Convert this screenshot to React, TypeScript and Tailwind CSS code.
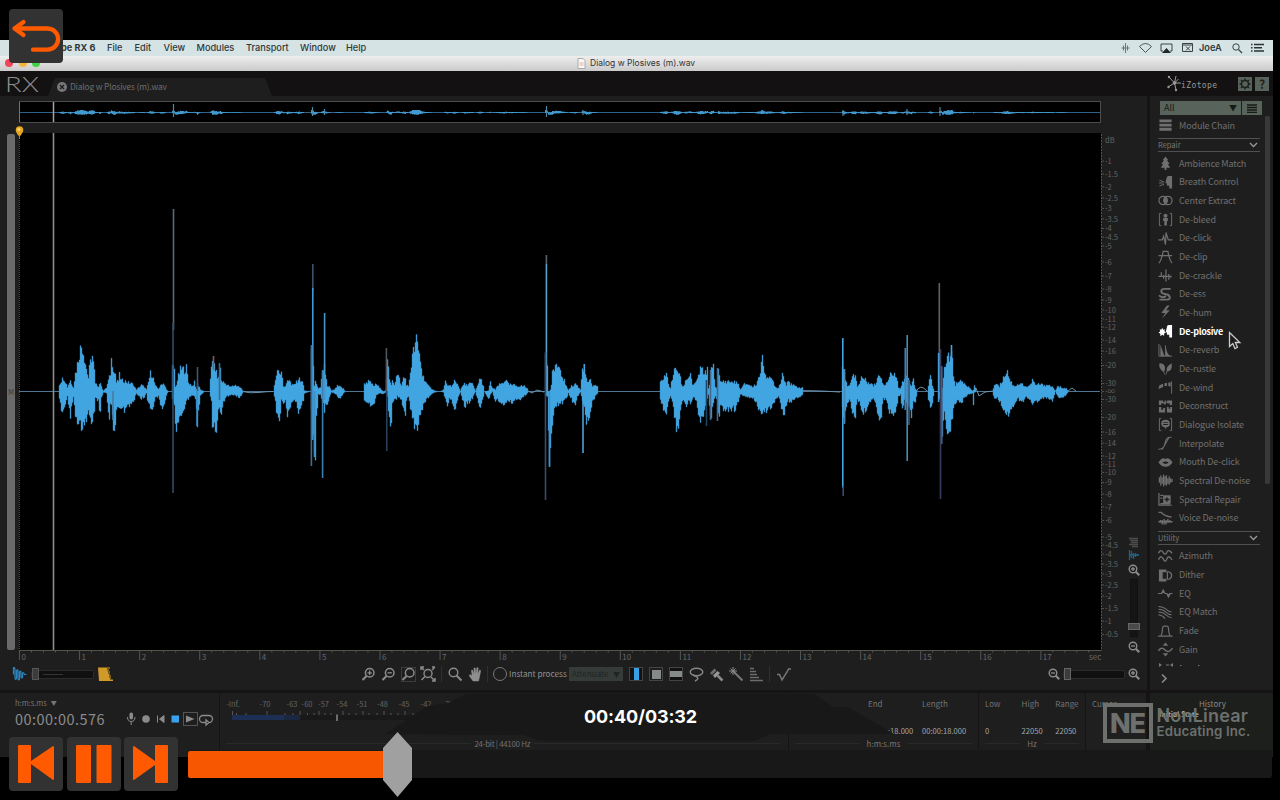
import React from "react";

type Pt = [number, number, number];

/* x, extent above the centre line, extent below the centre line */
const SEGMENTS: Pt[][] = [
  [[58,0,0],[59,8,8],[61,12,20],[63,15,22],[65,11,14],[67,5,6],[69,10,20],[70,13,30],[71,8,15],[73,5,6],[75,20,25],[76,24,35],[79,43,39],[81,50,40],[82,50,42],[84,38,38],[86,25,30],[88,15,20],[89,25,30],[91,38,36],[92,39,36],[94,22,20],[95,8,8],[98,6,10],[100,10,26],[101,5,6],[103,1,1],[106,4,2],[108,12,20],[109,15,37],[110,20,14],[111,35,14],[112,33,30],[114,20,44],[115,20,42],[116,10,18],[118,12,18],[119,18,18],[121,12,22],[124,12,20],[127,10,16],[130,9,14],[133,8,10],[134,5,8],[136,2,2],[138,4,5],[141,7,8],[144,5,6],[146,2,2],[148,10,15],[150,20,18],[152,18,22],[153,14,15],[155,6,7],[158,3,5],[160,6,14],[162,9,17],[164,8,15],[166,2,4],[168,0,0]],
  [[171,0,0],[172,26,8],[174,25,15],[175,5,30],[176,8,44],[178,17,30],[180,24,24],[182,25,22],[184,24,18],[186,26,10],[188,10,8],[190,8,6],[192,6,4],[194,10,5],[195,5,8],[196,3,20],[197,8,34],[199,5,14],[200,2,4],[204,0,0]],
  [[209,0,0],[211,31,10],[212,30,45],[214,30,35],[216,20,42],[218,14,22],[220,25,20],[221,12,30],[223,10,12],[226,8,5],[230,5,4],[235,7,4],[239,5,7],[241,3,4],[243,0,0]],
  [[273,0,0],[274,7,5],[276,18,20],[278,24,33],[280,20,30],[281,26,10],[283,6,14],[285,5,10],[287,13,24],[289,13,24],[291,7,13],[293,7,10],[296,10,10],[298,14,22],[301,12,14],[303,7,10],[304,1,2],[310,0,0]],
  [[310,0,0],[311,46,20],[313,30,40],[314,6,66],[315,10,64],[316,10,30],[318,3,3],[320,4,3],[322,20,10],[324,30,20],[325,20,15],[327,5,14],[329,5,7],[331,1,1],[334,2,2],[337,6,5],[340,5,8],[343,3,2],[345,0,0]],
  [[363,0,0],[364,8,10],[366,10,13],[368,11,14],[371,9,16],[373,6,15],[376,8,4],[380,3,2],[383,0,3],[385,1,1],[387,30,5],[388,26,20],[389,12,35],[391,8,38],[392,14,15],[394,8,8],[396,16,8],[397,18,5],[399,14,6],[401,6,10],[403,15,18],[405,14,23],[406,8,10],[408,5,5],[410,22,20],[412,38,28],[414,48,35],[416,55,41],[418,45,36],[420,35,28],[422,18,20],[424,14,12],[427,7,8],[430,4,4],[434,1,1],[438,0,0]],
  [[440,0,0],[443,2,1],[445,10,8],[447,6,14],[449,8,8],[451,5,10],[453,8,14],[454,12,21],[456,10,15],[458,6,6],[460,1,1],[462,6,8],[464,8,17],[466,7,14],[469,9,11],[472,8,8],[475,1,0],[477,6,8],[479,14,20],[481,12,12],[483,6,7],[484,0,0],[488,1,8],[490,10,4],[492,4,0],[495,2,12],[497,6,8],[500,8,12],[503,10,13],[505,13,15],[508,8,9],[511,7,12],[514,7,10],[517,6,10],[520,6,8],[524,6,5],[527,3,2],[528,0,0]],
  [[544,0,0],[545,38,4],[547,30,5],[548,0,40],[549,0,70],[550,2,68],[551,6,45],[552,20,32],[554,28,20],[556,29,15],[558,26,15],[560,20,12],[562,16,14],[564,12,10],[566,5,8],[568,2,2],[571,6,8],[573,6,14],[575,9,14],[577,6,6],[580,2,1],[582,26,10],[584,27,20],[586,13,36],[588,10,28],[590,12,24],[592,6,12],[595,6,5],[597,5,2],[598,0,0]],
  [[659,0,0],[660,10,10],[663,15,18],[666,20,25],[668,8,12],[670,4,6],[672,15,12],[674,22,28],[676,25,38],[679,20,34],[681,8,15],[683,5,8],[685,12,16],[688,16,11],[690,20,14],[692,8,8],[694,8,6],[696,10,12],[698,18,22],[700,24,34],[702,24,30],[704,18,18],[706,22,10],[707,25,8],[708,3,4],[710,12,25],[711,32,28],[713,26,14],[715,5,5],[717,3,10],[718,22,30],[720,10,18],[722,11,18],[728,11,20],[735,10,19],[738,8,10],[740,2,3],[744,8,5],[748,8,6],[752,5,7],[756,8,12],[759,18,20],[762,34,26],[765,20,22],[768,14,18],[772,13,17],[775,5,9],[778,4,6],[780,10,12],[782,21,22],[784,12,26],[786,8,14],[788,14,10],[790,8,12],[794,6,8],[800,4,5],[802,4,3],[803,0,0]],
  [[841,0,0],[842,30,20],[844,22,32],[845,14,20],[847,5,12],[849,8,8],[851,12,16],[853,18,27],[855,18,28],[857,6,8],[859,8,12],[861,16,22],[864,14,22],[867,10,18],[870,10,10],[873,6,8],[876,10,15],[878,18,28],[879,20,34],[881,14,24],[883,8,8],[885,8,8],[888,14,20],[890,20,25],[893,18,24],[896,17,18],[898,5,6],[900,4,4],[902,10,22],[904,14,8],[905,20,10],[909,10,20],[911,6,25],[913,14,12],[915,3,10],[917,0,0]],
  [[927,0,0],[928,6,8],[930,18,19],[932,6,12],[934,0,0]],
  [[938,0,0],[939,20,8],[941,20,8],[942,4,50],[944,25,20],[946,36,35],[948,38,45],[949,34,48],[951,42,30],[952,35,36],[953,15,20],[955,7,12],[958,12,10],[961,12,12],[964,8,7],[968,5,3],[972,1,2],[973,2,17],[974,7,1],[976,0,0]],
  [[992,0,0],[994,8,8],[997,8,6],[999,6,10],[1001,10,14],[1003,15,20],[1005,20,24],[1007,24,26],[1009,14,22],[1012,8,16],[1015,6,12],[1018,8,8],[1022,8,12],[1026,5,6],[1030,7,10],[1032,13,16],[1035,7,12],[1038,8,10],[1044,7,7],[1048,7,8],[1052,5,10],[1055,1,0],[1057,5,5],[1060,5,8],[1063,4,7],[1066,3,3],[1068,0,0]],
];

/* x, top, bottom, colour */
const SPIKES: [number, number, number, string][] = [
  [173.5,209,330,"#596a76"],[173,323,493,"#2f4c68"],[197.5,367,391,"#45556b"],[197,391,426,"#388dc4"],
  [213.5,356,370,"#8a5c55"],[219.5,363,400,"#3a6a8c"],[113,391,420,"#4a7ba0"],
  [312.8,264,290,"#39546b"],[312.8,288,440,"#3c9bd6"],[311.4,345,466,"#466b8f"],[314.5,391,457,"#3c8ec6"],
  [322.6,370,478,"#3a7db0"],[324.6,313,400,"#4596cc"],
  [386.4,348,392,"#50565f"],[386.8,391,451,"#27415a"],
  [546.4,255,264,"#5c626c"],[546.4,264,392,"#55a3cf"],[545.5,352,500,"#3b4a68"],[549.5,391,467,"#3f93c9"],
  [583,392,453,"#4ba3d8"],[584.3,364,392,"#45a2dc"],
  [706.5,380,426,"#1c4563"],[710.5,370,420,"#46688a"],[717.5,368,421,"#46688a"],
  [842.8,338,488,"#43a5e0"],[843.2,486,496,"#334a7a"],[844.5,369,424,"#4a86b0"],
  [905.3,348,410,"#3f83b5"],[907.2,335,461,"#4a8ab8"],[909,380,425,"#385a7a"],
  [939.3,283,392,"#60606c"],[940.5,349,499,"#3a3c5e"],[941.8,366,444,"#3d5d80"],[951.5,345,392,"#42a4e0"],[938.6,353,402,"#3f9cd8"],
];

/* Repeatable ripple that gives the envelope its uneven edge */
function ripple(n: number) {
  const v = Math.sin(n * 12.9898) * 43758.5453;
  return v - Math.floor(v);
}

function outline(seg: Pt[], cy: number, k: number) {
  const up: string[] = [];
  const dn: string[] = [];
  for (let i = 0; i < seg.length - 1; i++) {
    const [x0, u0, d0] = seg[i];
    const [x1, u1, d1] = seg[i + 1];
    for (let x = x0; x < x1; x++) {
      const t = (x - x0) / (x1 - x0);
      const u = (u0 + (u1 - u0) * t) * (0.72 + 0.36 * ripple(x));
      const d = (d0 + (d1 - d0) * t) * (0.72 + 0.36 * ripple(x + 0.37));
      up.push(`${x},${(cy - Math.min(k === 1 ? 200 : 2.4, u * k)).toFixed(1)} ${x + 1},${(cy - Math.min(k === 1 ? 200 : 2.4, u * k)).toFixed(1)}`);
      dn.unshift(`${x + 1},${(cy + Math.min(k === 1 ? 200 : 2.2, d * k)).toFixed(1)} ${x},${(cy + Math.min(k === 1 ? 200 : 2.2, d * k)).toFixed(1)}`);
    }
  }
  return up.concat(dn).join(" ");
}

const DB: [string, number][] = [
  ["dB",140.5],["-1",161],["-1.5",174],["-2",187],["-2.5",198],["-3",208.5],["-3.5",219],["-4",228.5],["-4.5",237],["-5",246],["-6",262],["-7",276],["-8",289],["-9",300],["-10",310],["-11",319],["-12",327],["-14",340],["-16",351],["-20",365.5],["-30",383.5],["-∞",391.5],["-30",399.5],["-20",417.5],["-16",432],["-14",443],["-12",456],["-11",464],["-10",472.5],["-9",482.5],["-8",494],["-7",507],["-6",520.5],["-5",537],["-4.5",545],["-4",554],["-3.5",564],["-3",574],["-2.5",585],["-2",596],["-1.5",608.5],["-1",621],["-0.5",634.5],
];

function Overview() {
  return (
    <svg width="1083" height="23" viewBox="18 101 1083 23" className="block">
      <rect x="19.5" y="101.5" width="1081" height="21" fill="#000" stroke="#4c4c4c" />
      <path d="M19.5 102v20" stroke="#7c7b3c" />
      <path d="M20 112.500H1100" stroke="#2f6288" />
      {SEGMENTS.map((s, i) => <polygon key={i} points={outline(s, 112.5, 0.065)} fill="#4199d0" />)}
      <path d="M173.500 104v13M546.500 106v11M312.500 107v9M324.500 109v6M843 110v6M907 109v6M940 107v9M583 110v5" stroke="#4e88ab" strokeWidth="1.200" />
      <path d="M53.500 102v20" stroke="#a5a5a5" strokeWidth="1.500" />
    </svg>
  );
}

function WaveChart() {
  const seconds = Array.from({ length: 18 }, (_, i) => i);
  const minor = Array.from({ length: 90 }, (_, i) => i);
  return (
    <svg width="1109" height="540" viewBox="16 124 1109 540" className="block shrink-0 overflow-visible">
      <rect x="19" y="133" width="1082" height="517" fill="#000" />
      <path d="M19.500 134V650" stroke="#55562c" strokeDasharray="1 1" />
      <path d="M19 391.500H1100" stroke="#4d7593" />
      <path d="M243 391.500q6 2 15 1t15-1M528 391l4 2 5-3 7 2M790 391q20 -1 50 1M916 392q4-9 11-1M976 388l3 8 6-4 8-1M1068 391l4-3 4 3" stroke="#6c93ad" fill="none" strokeWidth="1" />
      {SEGMENTS.map((s, i) => <polygon key={i} points={outline(s, 391.5, 1)} fill="#41a5e1" stroke="#3d86b8" strokeWidth=".4" />)}
      {SPIKES.map((s, i) => <path key={i} d={`M${s[0]} ${s[1]}V${s[2]}`} stroke={s[3]} strokeWidth="1.600" />)}
      <path d="M53.500 133V650" stroke="#8d8d8d" strokeWidth="1.600" />
      <path d="M19.500 139v-4" stroke="#a98320" />
      <path d="M15.700 130a3.800 3.800 0 1 1 7.600 0c0 2.600-2 3.400-2.300 5.500h-3c-.3-2-2.300-3-2.300-5.500z" fill="#e6a820" />
      <circle cx="18.800" cy="129.500" r="1.500" fill="#f6d77b" />
      <path d="M19 650.500H1101.500" stroke="#555649" />
      {minor.map((m) => <path key={m} d={`M${19.5 + m * 12.015} 650v${m % 5 === 0 ? 0 : 2.5}`} stroke="#555" />)}
      {seconds.map((s) => (
        <g key={s}>
          <path d={`M${19.5 + s * 60.08} 650v10`} stroke="#555" />
          <text x={21.5 + s * 60.08} y="659.500" fill="#686868" fontSize="8" fontFamily="'Noto Sans CJK SC', sans-serif">{s}</text>
        </g>
      ))}
      <text x="1089" y="659.500" fill="#686868" fontSize="8" fontFamily="'Noto Sans CJK SC', sans-serif">sec</text>
      <path d="M1101.500 134V650" stroke="#51524a" strokeDasharray="2 1" />
      {DB.map(([t, y], i) => (
        <g key={i}>
          {i > 0 && <path d={`M1102 ${y}h2`} stroke="#4f4f4f" />}
          <text x="1105" y={y + 2.8} fill="#646464" fontSize="7.500" fontFamily="'Noto Sans CJK SC', sans-serif">{t}</text>
        </g>
      ))}
    </svg>
  );
}

const S = { fill: "none", stroke: "currentColor", strokeWidth: 1.3 } as const;

const ICONS: Record<string, React.ReactNode> = {
  "Module Chain": <path d="M2 2h13v3H2zM2 6.500h13v3H2zM2 11h13v3H2z" fill="currentColor" />,
  "Ambience Match": <path d="M8.500 1l3 4H10l3 4h-2l2.500 4H9.500v2.500h-2V13h-4L6 9H4l3-4H5.500z" fill="currentColor" />,
  "Breath Control": <><path d="M9.500 4Q10 1.500 12 1.500h3.500V15h-3v-3H10V9.500L8.500 9z" fill="currentColor" /><path d="M2 6l5 2M1.500 9h5M2 12l5-1.500" {...S} strokeWidth={1} /></>,
  "Center Extract": <><circle cx="6" cy="8.500" r="4.500" {...S} /><circle cx="11" cy="8.500" r="4.500" {...S} /><path d="M8.500 4.800q4 3.700 0 7.400-4-3.700 0-7.400z" fill="currentColor" /></>,
  "De-bleed": <><path d="M4 2H2v13h2M13 2h2v13h-2" {...S} strokeWidth={1} /><circle cx="8.500" cy="4.500" r="2.200" fill="currentColor" /><path d="M6 7h5v3H10v5H7.200v-5H6z" fill="currentColor" /></>,
  "De-click": <path d="M1 10h4l1.500-4L8.500 15 9 2l2.500 8H16" {...S} />,
  "De-clip": <path d="M1.500 15.500Q4 13 6 3h5q2 10 4.500 12.500M1 7.500h14.500" {...S} />,
  "De-crackle": <path d="M1 9.500h14M4 5v5M6.500 8v4M9 2v13M12 7v6M14 9v2" {...S} />,
  "De-ess": <path d="M14 2.500H7.500q-3.500 0-3.500 2.500t4 3 5 3-3 3H2M1.500 9.500Q5 13 9 10" {...S} strokeWidth={2} />,
  "De-hum": <path d="M10 1L4 9h4l-3 6 8-9H9l4-5z" fill="currentColor" />,
  "De-plosive": <><path d="M10 4Q10 1.500 12 1.500h3.500V15h-3v-3H10V9.500L8.700 9z" fill="currentColor" /><path d="M5 4.500l1 2 2-.5-.8 2L9 9.500l-2 1V13l-2-1-2 1.500V11L1 9.500 2.800 8.400 2.300 6 4 6.500z" fill="currentColor" /></>,
  "De-reverb": <><path d="M1.500 1.500v13h14M8.500 3v11.500" {...S} strokeWidth={1} /><path d="M3 2q2 6 4.500 12.500H3zM9 5q1 8 5 9.500H9z" fill="currentColor" /></>,
  "De-rustle": <><path d="M2 3q6 0 6 5 0 4-2 4Q1 9 2 3z" fill="currentColor" /><path d="M15 3q1 6-2 8l-3 1q-2-5 5-9z" fill="currentColor" /><path d="M6 11l2 4M10 11l-1 4" {...S} strokeWidth={0.8} /></>,
  "De-wind": <><path d="M15 2v13" {...S} strokeWidth={1} /><path d="M14 3v4.500l-2.500-.5V3.500zM10 3.500V7L7.500 7V4zM6 4.500V8L1 10l1-4z" fill="currentColor" /></>,
  "Deconstruct": <path d="M1.500 2H6v2h1.500V2H9v4H6.500V5H4v2H1.500zM10 2h5.500v5H13V5h-3zM1.500 9H4v3h2v-2h2v5H1.500zM10 9h2v2h1.500V9h2v6H10zM9.500 3.500h3v1h-3z" fill="currentColor" />,
  "Dialogue Isolate": <><path d="M4 2H2v13h2M13 2h2v13h-2" {...S} strokeWidth={1} /><path d="M8.500 3.500Q13 3.500 13 7.500t-3.500 4L8 14v-2.500Q4 11.500 4 7.500t4.500-4zM6 7h5v-1H6zM6 9h5V8H6z" fill="currentColor" fillRule="evenodd" /></>,
  "Interpolate": <path d="M1 14.500Q7 15 8 8t7-6M5 15L12.500 1.500" {...S} strokeWidth={1.1} />,
  "Mouth De-click": <path d="M1 8.500Q4 4 6.500 4l2 .8 2-.8Q13 4 16 8.500 13 13 8.500 13T1 8.500zM5 8.500q3.500 3 7 0-3.500-2-7 0z" fill="currentColor" fillRule="evenodd" />,
  "Spectral De-noise": <path d="M2 5v6M3.500 3v11M5 5v7M6.500 2v13M8 4v9M9.500 3v11M11 6v6M12.500 4v9M14 6v5M15.500 7v3" {...S} />,
  "Spectral Repair": <><path d="M1.500 1.500v13H15M3 4h3M3 7h2M3 13h10" {...S} /><path d="M6 4h8v9H6z" fill="currentColor" /><path d="M10 6v5M7.500 8.500h5" stroke="#1e1e1e" strokeWidth="1.500" /></>,
  "Voice De-noise": <path d="M1 2h3q4 4 11 5M3 10v3M5 10v5M7 9v6M9 10v5M11 9v4M13 10v3M1 12h15" {...S} strokeWidth={1.5} />,
  "Azimuth": <path d="M1 5q2.500-5 5-1t4 0 5.500 1M1 12q2.500-6 5-1t4 0 5.500 1" {...S} strokeWidth={1.5} />,
  "Dither": <><path d="M1.500 2h8v13h-8zM5.500 5v7h4V5z" fill="currentColor" fillRule="evenodd" /><path d="M10.500 4.500H12q3 1 3 4t-3 4h-1.500z" {...S} /></>,
  "EQ": <><path d="M0.500 8.500h4L6 5l2 3.500h2L11.500 12 13 8.500h3" {...S} /><path d="M4 8l2-4 2 4zM9.500 9l2.500 4 2-4z" fill="currentColor" /></>,
  "EQ Match": <path d="M1 2q5 0 8 3t6 3M1 5q5 0 8 3t6 3M1 8q5 0 8 3t6 3M1 11q5 1 7 4" {...S} strokeWidth={1.1} />,
  "Fade": <path d="M0.500 13.500h3Q5 11 5.500 4q.2-1.200 1.500-1.200h3q1.300 0 1.500 1.200.5 7 2 9.500h2.500M3 13.500h11" {...S} />,
  "Gain": <><path d="M1 10q3-5 7-1t8-2" {...S} strokeWidth={1.6} /><path d="M5.500 4.500L8.500 1l3 3.500zM5.500 12.500l3 3.500 3-3.500z" fill="currentColor" /></>,
};

const REPAIR = ["Ambience Match","Breath Control","Center Extract","De-bleed","De-click","De-clip","De-crackle","De-ess","De-hum","De-plosive","De-reverb","De-rustle","De-wind","Deconstruct","Dialogue Isolate","Interpolate","Mouth De-click","Spectral De-noise","Spectral Repair","Voice De-noise"];
const UTILITY = ["Azimuth","Dither","EQ","EQ Match","Fade","Gain"];

function ModuleRow({ name }: { name: string }) {
  const active = name === "De-plosive";
  return (
    <div className={active ? "flex h-[18.68px] shrink-0 items-center gap-1.5 pl-2 text-white" : "flex h-[18.68px] shrink-0 items-center gap-1.5 pl-2 text-[#6f6f6f]"}>
      <svg width="15" height="15" viewBox="0.500 0.500 16 16" className="shrink-0">{ICONS[name]}</svg>
      <span className={active ? "-mt-px text-[9px] leading-none font-bold tracking-[-0.3px] whitespace-nowrap" : "-mt-px text-[9px] leading-none tracking-[-0.15px] whitespace-nowrap"}>{name}</span>
    </div>
  );
}

function GroupHead({ label }: { label: string }) {
  return (
    <div className="ml-2 flex h-[14px] w-[102px] shrink-0 items-center justify-between border-y border-[#505050] pr-[2px] text-[7.5px] leading-none text-[#777]">
      <span className="-mt-px">{label}</span>
      <svg width="9" height="6" viewBox="0 0 9 6"><path d="M1 1l3.500 3.500L8 1" fill="none" stroke="#999" strokeWidth="1.300" /></svg>
    </div>
  );
}

function Lens({ sign, box, className }: { sign?: string; box?: boolean; className?: string }) {
  return (
    <svg width="15" height="15" viewBox="0 0 15 15" className={className}>
      {box && <rect x=".5" y=".5" width="14" height="14" fill="none" stroke="#3c3c3c" />}
      <circle cx="8.700" cy="5.800" r="4.300" fill="none" stroke="#8b8b8b" strokeWidth="1.500" />
      <path d="M5.500 9L1.500 13" stroke="#8b8b8b" strokeWidth="2" />
      {sign && <path d={sign === "+" ? "M6.500 5.800h4.400M8.700 3.600V8" : "M6.500 5.800h4.400"} stroke="#8b8b8b" strokeWidth="1.300" />}
    </svg>
  );
}

function LensR({ plus }: { plus?: boolean }) {
  return (
    <svg width="12" height="12" viewBox="0 0 12 12" className="shrink-0">
      <circle cx="5" cy="5" r="3.800" fill="none" stroke="#8b8b8b" strokeWidth="1.400" />
      <path d="M7.800 7.800l3.400 3.400" stroke="#8b8b8b" strokeWidth="2.200" />
      <path d={plus ? "M3 5h4M5 3v4" : "M3 5h4"} stroke="#8b8b8b" strokeWidth="1.300" />
    </svg>
  );
}

function Cell({ children }: { children: React.ReactNode }) {
  return <div className="flex w-5 shrink-0 items-center justify-center">{children}</div>;
}

function Toolbar() {
  return (
    <div className="flex h-[20px] items-center">
      <svg width="16" height="16" viewBox="0 0 16 16" className="ml-3 shrink-0"><path d="M1.500 1v7.500M1.500 2q1.500-1.500 1.500 2v8q1 3 1.500 0V5q1-3 1.500 0v8q1 2 1.500 0V6q1-2 1.500 0v5q1 2 1.500 0V7q1-1 2 1.500h2" fill="none" stroke="#2e86c0" strokeWidth="1.200" /></svg>
      <div className="ml-[3px] flex h-[9px] w-[63px] shrink-0 items-center rounded-xs border border-[#2c2c2c] bg-[#101010]">
        <div className="h-[12px] w-[7px] shrink-0 border border-[#555] bg-[#3c3c3c]" /><div className="ml-1 h-px w-5 bg-[#333]" />
      </div>
      <svg width="15" height="15" viewBox="0 0 15 15" className="ml-1 shrink-0"><path d="M0 .5h12v1H9v1h2v1H9.500v1H12v1h-2v1h2v1h-1v1h2v1h-2v1h2v1h-1v1h3v1.500H1z" fill="#cf9a28" /></svg>
      <div className="ml-[245px] flex items-center">
        <Cell><Lens sign="+" /></Cell><Cell><Lens sign="-" /></Cell><Cell><Lens box /></Cell>
        <Cell><svg width="16" height="16" viewBox="0 0 16 16"><circle cx="8" cy="7.500" r="4" fill="none" stroke="#8b8b8b" strokeWidth="1.400" /><path d="M1 4V1h3M12 1h3M15 12v3h-3M1 1l3 3M15 1l-3 3M5 10.500L1.500 14M11 11l4 4" stroke="#8b8b8b" strokeWidth="1.500" fill="none" /></svg></Cell>
      </div>
      <div className="ml-[3px] h-4 w-px bg-[#303030]" />
      <svg width="15" height="15" viewBox="0 0 15 15" className="ml-[6px]"><circle cx="5.500" cy="5.500" r="4.300" fill="none" stroke="#8b8b8b" strokeWidth="1.400" /><path d="M8.500 8.500l5 5" stroke="#8b8b8b" strokeWidth="2" /></svg>
      <svg width="14" height="15" viewBox="0 0 14 15" className="ml-[6px]"><path d="M4 14L0 8.500 1 7.500l2 1.500L2.500 3h1L5 7V1h1.300l.5 6L8 .5l1.200.3L8.700 7l2-4 1 .5L10.500 10 9.500 14z" fill="#8f8f8f" stroke="#8f8f8f" strokeWidth=".5" /></svg>
      <div className="ml-[4px] h-4 w-px bg-[#303030]" />
      <div className="ml-[5px] h-[14px] w-[14px] shrink-0 rounded-full border-[1.5px] border-[#777]" />
      <span className="-mt-px ml-[2px] w-[60px] shrink-0 text-[8.2px] leading-none whitespace-nowrap text-[#919191]">Instant process</span>
      <div className="flex h-[14px] w-[54px] shrink-0 items-center justify-between bg-[#353b38] px-[3px] text-[8px] leading-none text-[#1f2321]"><span>Attenuate</span><span className="text-[7px]">▼</span></div>
      <div className="ml-[3px] flex items-center">
        <Cell><div className="flex h-[14px] w-[14px] items-center justify-center border border-[#444] bg-[#121212]"><div className="h-3 w-[5px] bg-[#35a0e6]" /></div></Cell>
        <Cell><div className="flex h-[14px] w-[14px] items-center justify-center border border-[#444]"><div className="h-[9px] w-[9px] bg-[#868b88]" /></div></Cell>
        <Cell><div className="flex h-[14px] w-[14px] items-center justify-center border border-[#444] bg-[#121212]"><div className="h-[6px] w-3 bg-[#868b88]" /></div></Cell>
        <Cell><svg width="15" height="15" viewBox="0 0 15 15"><ellipse cx="7.500" cy="5" rx="6.300" ry="3.800" fill="none" stroke="#868686" strokeWidth="1.400" /><path d="M4 8q3 1 4.500 2.500T6 14" fill="none" stroke="#868686" strokeWidth="1.400" /></svg></Cell>
        <Cell><svg width="15" height="15" viewBox="0 0 15 15"><path d="M1 6l4.500-4.500 2 2L3 8z" fill="#6c6c6c" /><path d="M4 8.500l4.500-4.500 2.500 2-5 5z" fill="#999" /><path d="M8.500 8.500l5 5" stroke="#8a8a8a" strokeWidth="2.500" /></svg></Cell>
        <Cell><svg width="15" height="15" viewBox="0 0 15 15"><path d="M4 4l9.500 9.500" stroke="#777" strokeWidth="2" /><path d="M4 0v8M0 4h8M1.500 1.500l5 5M6.500 1.500l-5 5" stroke="#8a8a8a" strokeWidth="1" /></svg></Cell>
        <Cell><svg width="15" height="15" viewBox="0 0 15 15"><path d="M1 1.500h4M1 4.500h6M1 7.500h7M1 10.500h9M1 13.500h13" stroke="#6c6c6c" strokeWidth="1.600" /></svg></Cell>
      </div>
      <div className="ml-[3px] h-4 w-px bg-[#303030]" />
      <svg width="15" height="15" viewBox="0 0 15 15" className="ml-[6px]"><path d="M1 7.500h2.500L6 13l5-8 1.500-3H15" fill="none" stroke="#777" strokeWidth="1.500" /></svg>
      <div className="mr-[7px] ml-auto flex items-center">
        <LensR />
        <div className="mx-[3px] flex h-[9px] w-[62px] items-center rounded-xs border border-[#2c2c2c] bg-[#101010]"><div className="h-[12px] w-[7px] shrink-0 border border-[#666] bg-[#3c3c3c]" /></div>
        <LensR plus />
      </div>
    </div>
  );
}

const METER: [string, number][] = [["-Inf.",233],["-70",265],["-63",292],["-60",307],["-57",323.5],["-54",342],["-51",362],["-48",382.5],["-45",404],["-42",426],["-39",448]];

function Meter() {
  return (
    <svg width="568" height="64" viewBox="220 693 568 64" className="block">
      {METER.map(([t, x]) => <text key={t} x={x} y="706.500" textAnchor="middle" fill="#636363" fontSize="7.500" fontFamily="'Noto Sans CJK SC', sans-serif">{t}</text>)}
      <rect x="232" y="715" width="200" height="5" fill="#191919" />
      <rect x="232" y="715" width="52" height="5" fill="#1d2f55" /><rect x="284" y="715" width="16" height="5" fill="#1b2740" />
      {[232.5,236.5,246,267,285,293,300,307.5,314,319,325,331,343,349,356,363,369,377,384,391,398,405,413,421].map((x, i) => <path key={x} d={`M${x} ${i % 3 === 0 ? 711 : 713}V715`} stroke="#555" />)}
      <path d="M337 714.500v6.500" stroke="#888" strokeWidth="1.500" />
      <path d="M226 743.500H471M534 743.500H780" stroke="#292929" />
      <text x="474.500" y="746.500" fill="#707070" fontSize="8" fontFamily="'Noto Sans CJK SC', sans-serif" textLength="56">24-bit | 44100 Hz</text>
    </svg>
  );
}

function Field({ label, value, className, shift }: { label: string; value: string; className: string; shift?: boolean }) {
  return (
    <div className={className}>
      <div className="text-[#747474]">{label}</div>
      <div className={shift ? "mt-[18px] pl-[20px] text-[7.6px] text-[#a5a5a5]" : "mt-[18px] text-[7.6px] text-[#a5a5a5]"}>{value}</div>
    </div>
  );
}

function Unit({ children }: { children: React.ReactNode }) {
  return <div className="mt-[4px] flex items-center gap-2 text-[8px] leading-[9px] text-[#747474]"><i className="h-px flex-1 bg-[#292929]" />{children}<i className="h-px flex-1 bg-[#292929]" /></div>;
}

function StatusBar() {
  return (
    <div className="flex h-[64px] gap-px bg-[#161314]">
      <div className="w-[219px] shrink-0 bg-[#1e1e1e] pt-[5px] pl-[15px]">
        <div className="flex items-center gap-1 text-[7.5px] leading-[9px] text-[#777]">h:m:s.ms <span className="text-[6px]">▼</span></div>
        <div className="mt-[3px] flex h-[18px] items-center">
          <span className="w-[111px] text-[14.5px] leading-none tracking-[0.45px] text-[#8c8c8c]">00:00:00.576</span>
          <svg width="88" height="16" viewBox="0 0 88 16">
            <rect x="3.500" y="1.500" width="3.500" height="7" rx="1.700" fill="#8b8b8b" /><path d="M1.500 6q0 4.500 3.700 4.500T9 6M5.200 10.500V14" fill="none" stroke="#8b8b8b" />
            <circle cx="20" cy="8" r="3.800" fill="#8b8b8b" />
            <path d="M31.500 4.500v7M38 4.500v7L33.500 8z" fill="#8b8b8b" stroke="#8b8b8b" />
            <rect x="45.500" y="4.500" width="7.500" height="7" fill="#39a3ea" />
            <rect x="57.500" y="1.500" width="14" height="13" fill="none" stroke="#555" /><path d="M60 4.500v7L68.500 8z" fill="#8b8b8b" />
            <path d="M80 11.500h-3a3.500 3.500 0 0 1 0-7h6a3.500 3.500 0 0 1 0 7h-1M80 9v5l3-2.500z" fill="none" stroke="#8b8b8b" strokeWidth="1.300" />
          </svg>
        </div>
      </div>
      <div className="w-[568px] shrink-0 bg-[#1e1e1e]"><Meter /></div>
      <div className="w-[189px] shrink-0 bg-[#1e1e1e] px-1.5 pt-[6px]">
        <div className="flex justify-end text-[8px] leading-[9px]">
          <Field className="w-[54px] text-left" label="End" value=":18.000" shift />
          <Field className="w-[50px] text-left" label="Length" value="00:00:18.000" />
        </div>
        <Unit>h:m:s.ms</Unit>
      </div>
      <div className="w-[106px] shrink-0 bg-[#1e1e1e] px-1.5 pt-[6px]">
        <div className="flex text-[8px] leading-[9px]">
          <Field className="w-[37px]" label="Low" value="0" /><Field className="w-[34px]" label="High" value="22050" /><Field className="w-[24px]" label="Range" value="22050" />
        </div>
        <Unit>Hz</Unit>
      </div>
      <div className="w-[60px] shrink-0 bg-[#1e1f1e] pt-[6px] pl-1.5 text-[8px] leading-[9px] text-[#707070]">Cursor</div>
      <div className="ml-[3px] flex-1 bg-[#1c1f1c] pt-[6px] text-[8px] leading-[9px] text-[#8a8a8a]">
        <div className="pl-[49px]">History</div><div className="mt-[2px] pl-[9px] text-[7px] font-bold text-[#a5a5a5]">Initial State</div>
      </div>
    </div>
  );
}

function MenuBar() {
  return (
    <div className="flex h-[15.5px] shrink-0 items-center bg-[#d5e3e4] pl-[55px] font-['Inter',sans-serif] text-[9.2px] leading-none font-medium text-[#30383a]">
      <span className="w-[52px] pl-[6px] font-bold whitespace-nowrap">pe RX 6</span>
      <span className="w-[27.5px]">File</span><span className="w-[29px]">Edit</span><span className="w-[33px]">View</span><span className="w-[49.5px]">Modules</span>
      <span className="w-[54px]">Transport</span><span className="w-[46px]">Window</span><span>Help</span>
      <div className="mr-2 ml-auto flex items-center">
        <svg width="80" height="14" viewBox="1118 41 80 14" className="mr-[2px]">
          <path d="M1122.500 48h8M1124.500 45.500v5M1126.500 43v10M1128.500 45.500v5" stroke="#6a7678" />
          <path d="M1140.500 46.500q6-6 12 0l-6 6z" fill="none" stroke="#4b5558" />
          <path d="M1164 51h-2v-7h11v7h-2" fill="none" stroke="#3a4244" /><path d="M1163 53l4.500-5 4.500 5z" fill="#20282a" />
          <path d="M1183.500 43.500h10v8h-10zM1184 45h9M1187 46.500l4 4M1191 46.500l-4 4" fill="none" stroke="#3a4244" />
        </svg>
        <span className="w-[32px] font-semibold">JoeA</span>
        <svg width="34" height="12" viewBox="0 0 34 12"><circle cx="5" cy="5" r="3.200" fill="none" stroke="#3a4244" /><path d="M7.500 7.500L11 11" stroke="#3a4244" strokeWidth="1.300" /><path d="M20 2.500h1.500M23 2.500h10M20 5.800h1.500M23 5.800h8M20 9h1.500M23 9h10" stroke="#2a3234" strokeWidth="1.400" /></svg>
      </div>
    </div>
  );
}

function TitleBar() {
  return (
    <div className="flex h-[15.5px] shrink-0 items-center bg-linear-to-b from-[#eeeeee] to-[#cbcbcb] pl-[5px] font-['Inter',sans-serif] text-[8.5px] leading-none text-[#333]">
      <div className="flex w-[572px] gap-[5.5px]"><i className="h-2 w-2 rounded-full bg-[#f0455a]" /><i className="h-2 w-2 rounded-full bg-[#f2b63a]" /><i className="h-2 w-2 rounded-full bg-[#3cd342]" /></div>
      <svg width="9" height="11" viewBox="0 0 9 11"><path d="M1 .5h5l2 2v8H1z" fill="#f8f8f8" stroke="#aaa" /><path d="M2.500 5h4M2.500 7h4" stroke="#e0b0a0" /></svg>
      <span className="ml-1">Dialog w Plosives (m).wav</span>
    </div>
  );
}

function Header() {
  return (
    <div className="flex h-[25px] shrink-0 items-end bg-[#141112]">
      <div className="flex h-full w-[43px] items-center pl-[5px]"><span className="origin-left scale-x-125 font-['Lato',sans-serif] text-[22px] leading-none font-light text-[#8e8e8e]">RX</span></div>
      <div className="relative flex h-[18px] w-[230px] items-center">
        <svg width="230" height="18" viewBox="0 0 230 18" className="absolute inset-0"><path d="M5 18L12 0H222l7 18z" fill="#1e1e1e" /></svg>
        <svg width="12" height="12" viewBox="0 0 12 12" className="relative ml-[13px]"><circle cx="6" cy="6" r="5" fill="#777" /><path d="M4 4l4 4M8 4L4 8" stroke="#1e1e1e" strokeWidth="1.300" /></svg>
        <span className="relative -mt-px ml-[2px] text-[8.4px] leading-none tracking-[-0.15px] whitespace-nowrap text-[#6e6e6e]">Dialog w Plosives (m).wav</span>
      </div>
      <div className="mr-[4px] ml-auto flex h-full items-center">
        <svg width="14" height="17" viewBox="0 0 14 17"><path d="M7.500 8L2 2M7.500 8L9 1M7.500 8L1 12M7.500 8L9 15M7.500 8H14M7.500 8l4-4" stroke="#999" fill="none" /><circle cx="7.500" cy="8" r="1.800" fill="#999" /><circle cx="2" cy="2" r="1.200" fill="#999" /><circle cx="1.500" cy="12" r="1.200" fill="#999" /><circle cx="9" cy="15" r="1.200" fill="#999" /></svg>
        <span className="mt-[5px] w-[57px] font-['DejaVu_Sans_Mono',monospace] text-[8px] leading-none tracking-[0.4px] text-[#999]">iZotope</span>
        <div className="flex h-[14px] w-[14px] items-center justify-center bg-[#57625b]"><svg width="12" height="12" viewBox="0 0 12 12"><circle cx="6" cy="6" r="3.500" fill="none" stroke="#1d211e" strokeWidth="1.600" /><path d="M6 .5v2M6 9.500v2M.5 6h2M9.500 6h2M2 2l1.500 1.500M10 2L8.500 3.500M2 10l1.500-1.500M10 10L8.500 8.500" stroke="#1d211e" strokeWidth="1.500" /></svg></div>
        <div className="ml-[3px] flex h-[14px] w-[14px] items-center justify-center bg-[#57625b] text-[12px] leading-none font-bold text-[#1d211e]">?</div>
      </div>
    </div>
  );
}

function Sidebar() {
  return (
    <div className="flex w-[123px] shrink-0 bg-[#1e1e1e]">
      <div className="flex w-[115px] flex-col overflow-hidden pt-[5px]">
        <div className="ml-[10px] flex h-[14px] w-[102px] shrink-0 gap-px text-[9px] leading-none text-[#161a17]">
          <div className="flex flex-1 items-center justify-between bg-[#58645b] px-[4px]"><span className="-mt-px">All</span><span className="text-[8px]">▼</span></div>
          <div className="flex w-[20px] items-center justify-center bg-[#58645b]"><svg width="10" height="9" viewBox="0 0 10 9"><path d="M0 1h10M0 3.500h10M0 6h10M0 8.500h10" stroke="#161a17" strokeWidth="1.300" /></svg></div>
        </div>
        <div className="h-[1.5px] shrink-0" />
        <ModuleRow name="Module Chain" />
        <div className="h-[3px] shrink-0" />
        <GroupHead label="Repair" />
        <div className="h-[2px] shrink-0" />
        {REPAIR.map((n) => <ModuleRow key={n} name={n} />)}
        <div className="h-[3.5px] shrink-0" />
        <GroupHead label="Utility" />
        <div className="h-[2px] shrink-0" />
        {UTILITY.map((n) => <ModuleRow key={n} name={n} />)}
        <svg width="50" height="30" viewBox="1150 659 50 30" className="shrink-0"><path d="M1159 663v4l3-2zM1173 663v4l-3-2zM1166 664.500h3v1h-3zM1180 665h1.500v1H1180zM1198 665h1.500v1h-1.500z" fill="#777" /><path d="M1162 674.500l4 4-4 4" fill="none" stroke="#888" strokeWidth="1.700" /></svg>
      </div>
      <div className="mt-5 h-[368px] w-[5px] rounded-xs bg-[#373a38]" />
    </div>
  );
}

function PlayerButton({ children }: { children: React.ReactNode }) {
  return <div className="flex h-[54px] w-[54px] shrink-0 items-center justify-center rounded-[4px] bg-[#323232]">{children}</div>;
}

export default function App() {
  return (
    <div className="relative flex h-[800px] w-[1280px] flex-col overflow-hidden bg-black pt-10 font-['Noto_Sans_CJK_SC',sans-serif]">
      <div className="flex h-[717px] w-[1273px] shrink-0 flex-col bg-[#161314]">
        <MenuBar />
        <TitleBar />
        <Header />
        <div className="flex h-[594px] shrink-0 gap-[3px]">
          <div className="flex w-[1147px] shrink-0 flex-col bg-[#1e1e1e] pt-[5px]">
            <div className="pl-[18px]"><Overview /></div>
            <div className="flex h-[540px] shrink-0">
              <div className="mt-[10px] mr-[1px] ml-[7px] flex h-[516px] w-[8px] shrink-0 items-center justify-center rounded-xs bg-[#6a6a6a] text-[7px] text-[#333]">M</div>
              <WaveChart />
              <div className="flex w-[17px] flex-col items-center pt-[413px]">
                <svg width="12" height="24" viewBox="0 0 12 24" className="shrink-0"><path d="M1 1.500h9M2 3.500h8M3 5.500h7M1 7.500h9M4 9.500h6" stroke="#4c4c4c" strokeWidth="1.500" /><path d="M1.500 13v10M3.500 14v7M5.500 16v6M7.500 16v4M9.500 17v2M1 18h10" stroke="#23617f" fill="none" strokeWidth="1.300" /></svg>
                <div className="mt-[3px]"><LensR plus /></div>
                <div className="mt-[3px] flex h-[58px] w-[8px] shrink-0 flex-col items-center border border-[#111] bg-[#151515]"><div className="mt-[43px] h-[7px] w-[12px] shrink-0 border border-[#666] bg-[#4a4a4a]" /></div>
                <div className="mt-[4px]"><LensR /></div>
              </div>
            </div>
            <Toolbar />
          </div>
          <Sidebar />
        </div>
        <div className="h-[3px] shrink-0" />
        <StatusBar />
      </div>

      <svg width="16" height="20" viewBox="0 0 16 20" className="absolute top-[331px] left-[1227px]"><path d="M2.500 1.500v14l3.300-3 2.200 5 2.500-1.200-2.200-4.800h4.500z" fill="#1a1a1a" stroke="#ccc" strokeWidth="1.300" /></svg>

      <div className="absolute top-[703px] left-[1102.5px] flex items-center gap-[4px] font-['Inter',sans-serif] text-[#6d706d]">
        <div className="flex h-[40px] w-[50px] items-center justify-center border-[4px] border-[#6d706d] text-[27px] leading-none font-extrabold tracking-[-1px]">NE</div>
        <div className="flex flex-col font-semibold whitespace-nowrap">
          <span className="text-[18px] leading-[16px] tracking-[0.2px]">NonLinear</span><span className="text-[13.3px] leading-[15px] tracking-[0.15px]">Educating Inc.</span>
        </div>
      </div>

      <svg width="512" height="48" viewBox="385 693 512 48" className="absolute top-[693px] left-[385px]"><path d="M385 734l43-28 20-3 18-9H815l18 13h15l46 27H770l-16 7H540l-16-6z" fill="#181818" /></svg>
      <div className="absolute top-[706px] left-[583px] w-[115px] text-center font-['Inter',sans-serif] text-[18px] leading-[22px] font-bold tracking-[-0.1px] text-white">00:40/03:32</div>

      <div className="absolute top-[9px] left-[9px]">
        <PlayerButton><svg width="54" height="54" viewBox="9 9 54 54"><path d="M14.500 28.500H47.500a10.600 10.600 0 0 1 0 21.200H33M23.500 22l-9 6.500 9 6.500" fill="none" stroke="#ff5a00" strokeWidth="4.300" strokeLinecap="round" strokeLinejoin="round" /></svg></PlayerButton>
      </div>
      <div className="absolute top-[737px] left-[9px] flex gap-[3.5px]">
        <PlayerButton><svg width="54" height="54"><path d="M10 8h11q1 0 1 1v15L44 9q1 0 1 1v32q0 1-1 1L22 27v18q0 1-1 1H10q-1 0-1-1V9q0-1 1-1z" fill="#ff5a00" /></svg></PlayerButton>
        <PlayerButton><svg width="54" height="54"><rect x="9" y="8" width="15" height="38" rx="1" fill="#ff5a00" /><rect x="29.500" y="8" width="15" height="38" rx="1" fill="#ff5a00" /></svg></PlayerButton>
        <PlayerButton><svg width="54" height="54"><path d="M10 9l21 15V9q0-1 1-1h11q1 0 1 1v36q0 1-1 1H32q-1 0-1-1V28L10 43q-1 0-1-1V10q0-1 1-1z" fill="#ff5a00" /></svg></PlayerButton>
      </div>
      <div className="absolute top-[750px] left-[187.5px] flex h-[28px] w-[1084px] items-center rounded-[3px] bg-[#181818]">
        <div className="h-[27px] w-[197px] rounded-l-[2px] bg-[#f75700]" />
        <svg width="29" height="65" viewBox="0 0 29 65" className="ml-[-2px] shrink-0"><path d="M14.500 0L29 16v32L14.500 65 0 48V16z" fill="#a0a0a0" /></svg>
      </div>
    </div>
  );
}
